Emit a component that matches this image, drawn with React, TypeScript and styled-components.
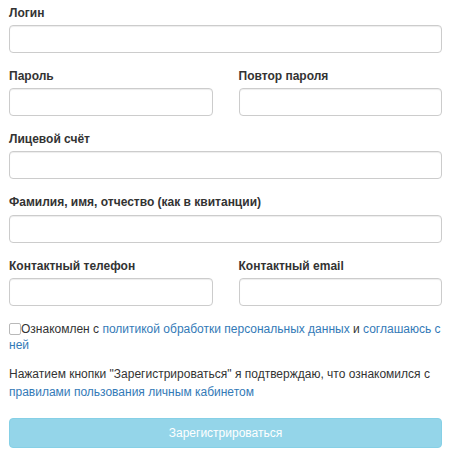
import styled, { createGlobalStyle } from "styled-components";

const GlobalStyle = createGlobalStyle`
  * {
    box-sizing: border-box;
  }
  body {
    margin: 0;
    background: #fff;
    font-family: "Liberation Sans", Arial, sans-serif;
    font-size: 12px;
    line-height: 1.42857;
    color: #333;
  }
`;

const Form = styled.form`
  padding: 5px 8px 0 9px;
`;

const Row = styled.div`
  display: grid;
  grid-template-columns: 1fr 1fr;
  column-gap: 26px;
`;

const Group = styled.div`
  margin-bottom: 15px;
`;

const Label = styled.label`
  display: block;
  font-weight: 700;
  margin-bottom: 3px;
`;

const Input = styled.input`
  display: block;
  width: 100%;
  height: 28px;
  padding: 4px 8px;
  font: inherit;
  color: #555;
  background: #fff;
  border: 1px solid #ccc;
  border-radius: 4px;
  box-shadow: inset 0 1px 1px rgba(0, 0, 0, 0.075);
  outline: none;
`;

const Agree = styled.div`
  line-height: 16px;
  margin: 0 0 12px;
`;

const Check = styled.input`
  appearance: none;
  width: 12px;
  height: 12px;
  margin: 0;
  vertical-align: -2px;
  border: 1px solid #b9b9b9;
  border-radius: 2px;
  background: #fff;
`;

const Note = styled.p`
  line-height: 18px;
  margin: 0 0 17px;
`;

const Link = styled.a`
  color: #337ab7;
  text-decoration: none;
`;

const Submit = styled.button`
  display: block;
  width: 100%;
  height: 30px;
  padding: 6px 12px;
  font: inherit;
  color: #fff;
  background: #5bc0de;
  border: 1px solid #46b8da;
  border-radius: 4px;
  opacity: 0.65;
  cursor: not-allowed;
`;

const Field = ({ label }: { label: string }) => (
  <Group>
    <Label>{label}</Label>
    <Input type="text" />
  </Group>
);

export default function App() {
  return (
    <>
      <GlobalStyle />
      <Form onSubmit={(e) => e.preventDefault()}>
        <Field label="Логин" />
        <Row>
          <Field label="Пароль" />
          <Field label="Повтор пароля" />
        </Row>
        <Field label="Лицевой счёт" />
        <Field label="Фамилия, имя, отчество (как в квитанции)" />
        <Row>
          <Field label="Контактный телефон" />
          <Field label="Контактный email" />
        </Row>
        <Agree>
          <Check type="checkbox" />
          Ознакомлен с <Link href="#">политикой обработки персональных данных</Link> и{" "}
          <Link href="#">соглашаюсь с ней</Link>
        </Agree>
        <Note>
          Нажатием кнопки "Зарегистрироваться" я подтверждаю, что ознакомился с{" "}
          <Link href="#">правилами пользования личным кабинетом</Link>
        </Note>
        <Submit type="submit" disabled>
          Зарегистрироваться
        </Submit>
      </Form>
    </>
  );
}
